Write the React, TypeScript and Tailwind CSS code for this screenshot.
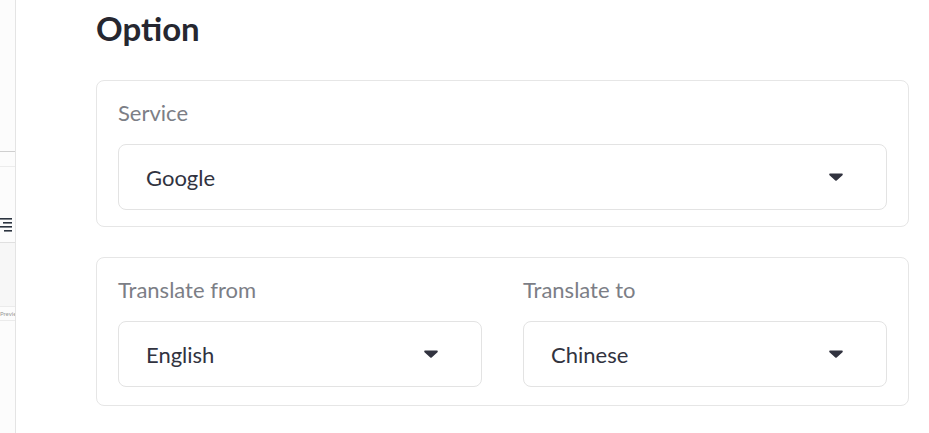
import React from 'react';

const Caret = () => (
    <svg width="14" height="8" viewBox="0 0 14 8" className="shrink-0">
        <path d="M1.2 0.6h11.6c0.9 0 1.3 1 0.7 1.6L7.7 7.4c-0.4 0.4-1 0.4-1.4 0L0.5 2.2C-0.1 1.6 0.3 0.6 1.2 0.6z" fill="#31333f" />
    </svg>
);

function Select({ value }: { value: string }) {
    return (
        <div className="h-[66px] rounded-[8px] border border-[#e3e3e3] bg-white flex items-center justify-between pl-[27px] pr-[43px]">
            <span className="text-[22px] leading-[26px] text-[#31333f] pt-[2px]">{value}</span>
            <Caret />
        </div>
    );
}

function Field({ label, value }: { label: string; value: string }) {
    return (
        <div className="flex flex-col">
            <label className="h-[26px] text-[22px] leading-[26px] text-[#7c7e86] mb-[18px]">{label}</label>
            <Select value={value} />
        </div>
    );
}

export default function App() {
    return (
        <div
            className="flex w-[929px] h-[433px] overflow-hidden bg-white"
            style={{ fontFamily: 'Lato, "Noto Sans", sans-serif' }}
        >
            {/* Sidebar strip */}
            <aside className="w-[16px] shrink-0 flex flex-col border-r border-[#e4e4e4] bg-[#fcfcfc] overflow-hidden">
                <div className="h-[152px] shrink-0 border-b border-[#cfcfcf]" />
                <div className="h-[15px] shrink-0 border-b border-[#ececec]" />
                <div className="h-[76px] shrink-0 border-b border-[#e0e0e0] pt-[51px]">
                    <svg width="12" height="14" viewBox="0 0 12 14">
                        <rect x="0" y="0" width="12" height="1.6" fill="#2c3440" />
                        <rect x="3" y="4" width="9" height="1.6" fill="#2c3440" />
                        <rect x="0" y="8" width="12" height="1.6" fill="#2c3440" />
                        <rect x="4" y="12" width="8" height="1.6" fill="#2c3440" />
                    </svg>
                </div>
                <div className="h-[63px] shrink-0 bg-[#f7f7f7]" />
                <div className="h-[15px] shrink-0 border-y border-[#ebebeb] flex items-center overflow-hidden whitespace-nowrap text-[6px] leading-[6px] text-[#9a9a9a]">
                    Preview
                </div>
                <div className="flex-1" />
            </aside>

            {/* Main */}
            <main className="flex-1 pl-[80px] pr-[20px]">
                <h1 className="pt-[9px] text-[33px] leading-[38px] font-bold text-[#262730]">Option</h1>

                <section className="mt-[33px] rounded-[8px] border border-[#e6e6e6] px-[21px] pt-[19px] pb-[16px]">
                    <Field label="Service" value="Google" />
                </section>

                <section className="mt-[30px] rounded-[8px] border border-[#e6e6e6] px-[21px] pt-[19px] pb-[18px]">
                    <div className="grid grid-cols-2 gap-[41px]">
                        <Field label="Translate from" value="English" />
                        <Field label="Translate to" value="Chinese" />
                    </div>
                </section>
            </main>
        </div>
    );
}
